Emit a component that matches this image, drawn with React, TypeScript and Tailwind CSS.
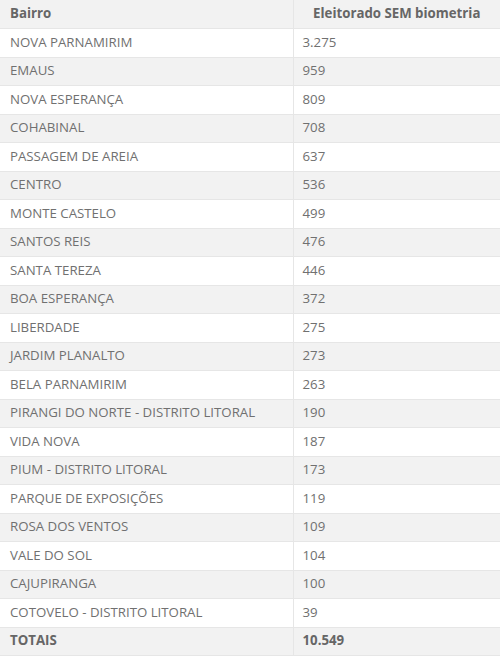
import React from "react";

const rows: [string, string][] = [
  ["NOVA PARNAMIRIM", "3.275"],
  ["EMAUS", "959"],
  ["NOVA ESPERANÇA", "809"],
  ["COHABINAL", "708"],
  ["PASSAGEM DE AREIA", "637"],
  ["CENTRO", "536"],
  ["MONTE CASTELO", "499"],
  ["SANTOS REIS", "476"],
  ["SANTA TEREZA", "446"],
  ["BOA ESPERANÇA", "372"],
  ["LIBERDADE", "275"],
  ["JARDIM PLANALTO", "273"],
  ["BELA PARNAMIRIM", "263"],
  ["PIRANGI DO NORTE - DISTRITO LITORAL", "190"],
  ["VIDA NOVA", "187"],
  ["PIUM - DISTRITO LITORAL", "173"],
  ["PARQUE DE EXPOSIÇÕES", "119"],
  ["ROSA DOS VENTOS", "109"],
  ["VALE DO SOL", "104"],
  ["CAJUPIRANGA", "100"],
  ["COTOVELO - DISTRITO LITORAL", "39"],
];

export default function App() {
  return (
    <div className="w-[500px] h-[658px] bg-white font-['Open_Sans',sans-serif] text-[13.25px]">
      <table className="w-full border-collapse">
        <thead>
          <tr className="h-[28.5px] bg-[#f2f2f2]">
            <th className="w-[293px] border border-[#e6e6e6] border-t-0 border-l-0 px-[10px] text-left font-bold text-[#666]">
              Bairro
            </th>
            <th className="border border-[#e6e6e6] border-t-0 border-r-0 px-[9px] text-center font-bold text-[#666]">
              Eleitorado SEM biometria
            </th>
          </tr>
        </thead>
        <tbody>
          {rows.map(([name, value], i) => (
            <tr key={name} className={`h-[28.5px] ${i % 2 === 0 ? "bg-white" : "bg-[#f2f2f2]"}`}>
              <td className="border border-[#e6e6e6] border-l-0 px-[10px] text-[#707070]">{name}</td>
              <td className="border border-[#e6e6e6] border-r-0 px-[9px] text-[#707070]">{value}</td>
            </tr>
          ))}
          <tr className="h-[28.5px] bg-[#f2f2f2]">
            <td className="border border-[#e6e6e6] border-l-0 px-[10px] font-bold text-[#666]">TOTAIS</td>
            <td className="border border-[#e6e6e6] border-r-0 px-[9px] font-bold text-[#666]">10.549</td>
          </tr>
        </tbody>
      </table>
    </div>
  );
}
